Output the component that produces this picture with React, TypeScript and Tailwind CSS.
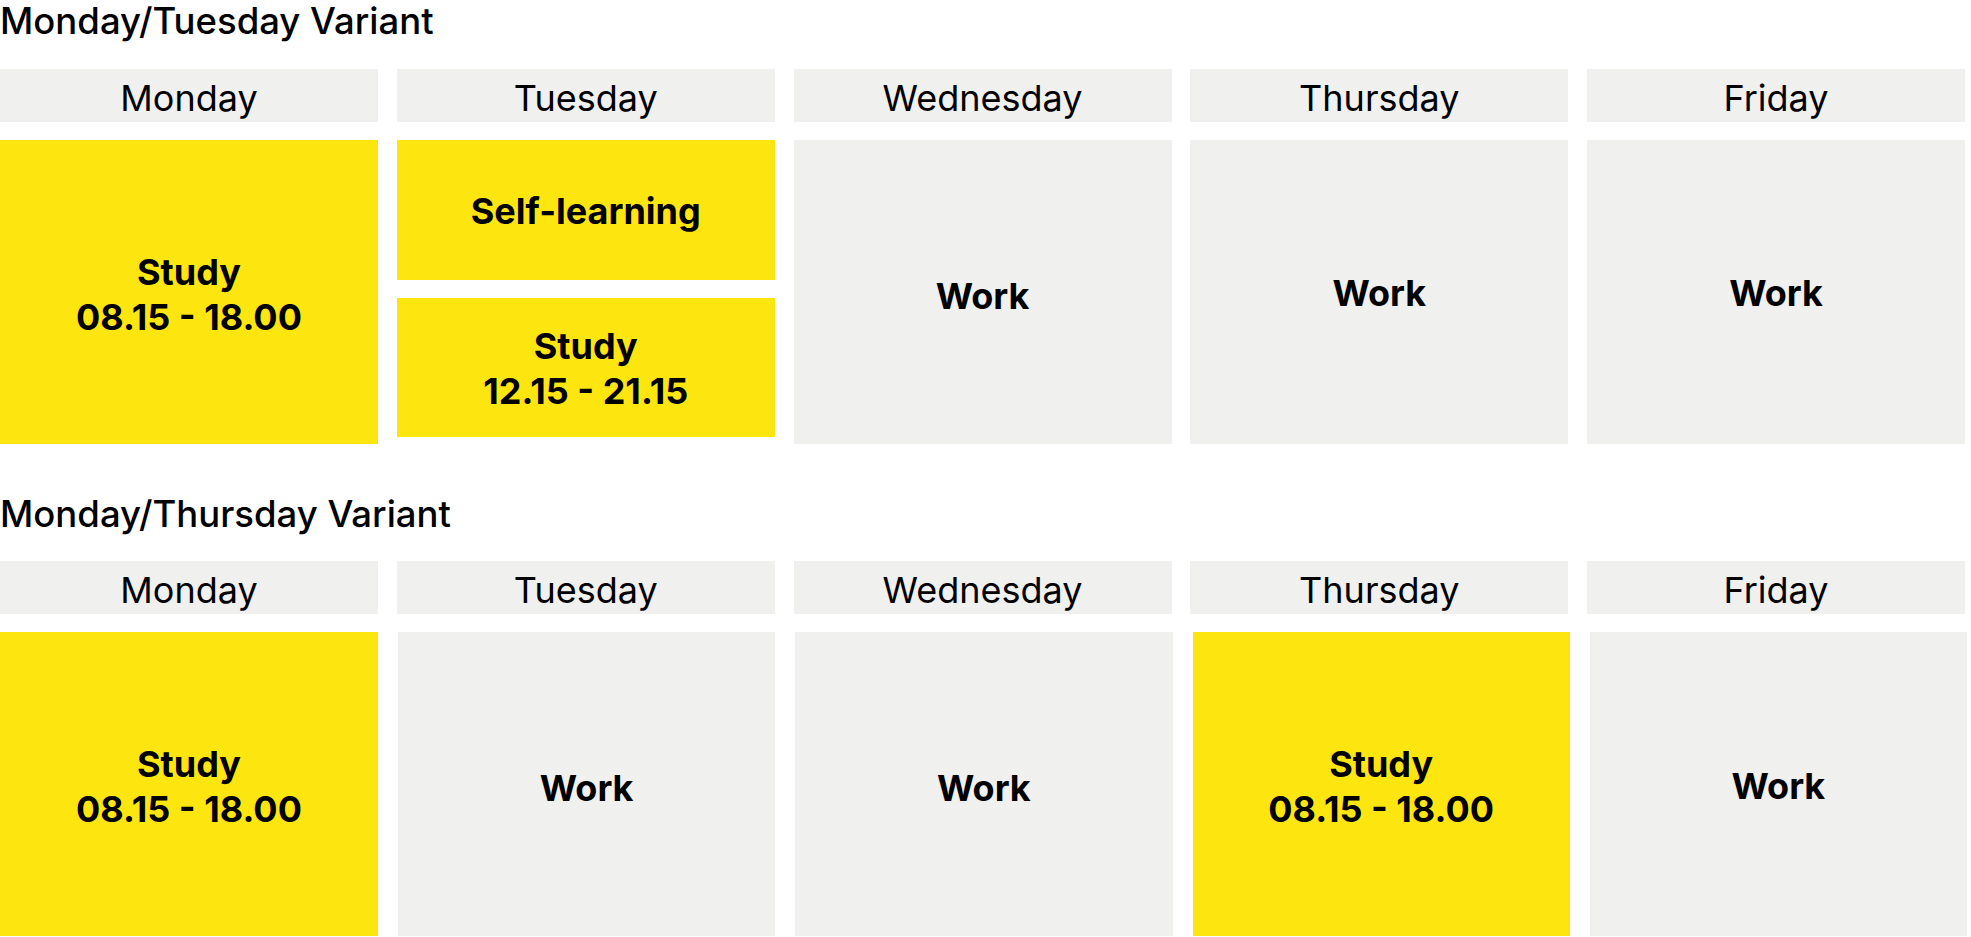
const DAYS = ['Monday', 'Tuesday', 'Wednesday', 'Thursday', 'Friday'];

type Tone = 'study' | 'work';

function Block({ tone, lines, className = '' }: { tone: Tone; lines: string[]; className?: string }) {
  const bg = tone === 'study' ? 'bg-[#fde60f]' : 'bg-[#f0f0ee]';
  return (
    <div
      className={`flex flex-col items-center justify-center text-center font-bold text-[36px] leading-[45px] text-black ${bg} ${className}`}
    >
      {lines.map((l) => (
        <span key={l}>{l}</span>
      ))}
    </div>
  );
}

function HeaderRow() {
  return (
    <div className="grid w-[1965px] grid-cols-5 gap-x-[18.75px]">
      {DAYS.map((d) => (
        <div
          key={d}
          className="flex h-[53px] items-center justify-center bg-[#f0f0ee] pt-[4px] text-[36px] leading-[44px] text-black"
        >
          {d}
        </div>
      ))}
    </div>
  );
}

function Title({ children }: { children: string }) {
  return <h2 className="text-[36.5px] font-medium leading-[43px] text-black">{children}</h2>;
}

export default function App() {
  const study = ['Study', '08.15 - 18.00'];
  return (
    <div className="min-h-screen bg-white font-['Inter','Noto_Sans',sans-serif]">
      {/* Monday/Tuesday */}
      <Title>Monday/Tuesday Variant</Title>
      <div className="mt-[26px]">
        <HeaderRow />
      </div>
      <div className="mt-[18px] grid w-[1965px] grid-cols-5 gap-x-[18.75px]">
        <Block tone="study" lines={study} className="h-[304px] pt-[5px]" />
        <div className="flex flex-col gap-[18px]">
          <Block tone="study" lines={['Self-learning']} className="h-[140px] pt-[2px]" />
          <Block tone="study" lines={['Study', '12.15 - 21.15']} className="h-[139px] pt-[2px]" />
        </div>
        <Block tone="work" lines={['Work']} className="h-[304px] pt-[8px]" />
        <Block tone="work" lines={['Work']} className="h-[304px] pt-[2px]" />
        <Block tone="work" lines={['Work']} className="h-[304px] pt-[2px]" />
      </div>

      {/* Monday/Thursday */}
      <div className="mt-[49px]">
        <Title>Monday/Thursday Variant</Title>
      </div>
      <div className="mt-[25px]">
        <HeaderRow />
      </div>
      <div className="mt-[18px] grid w-[1967px] grid-cols-[378px_repeat(4,minmax(0,1fr))] gap-x-[20px]">
        <Block tone="study" lines={study} className="h-[304px] pt-[5px]" />
        <Block tone="work" lines={['Work']} className="h-[304px] pt-[8px]" />
        <Block tone="work" lines={['Work']} className="h-[304px] pt-[8px]" />
        <Block tone="study" lines={study} className="h-[304px] pt-[5px]" />
        <Block tone="work" lines={['Work']} className="h-[304px] pt-[4px]" />
      </div>
    </div>
  );
}
